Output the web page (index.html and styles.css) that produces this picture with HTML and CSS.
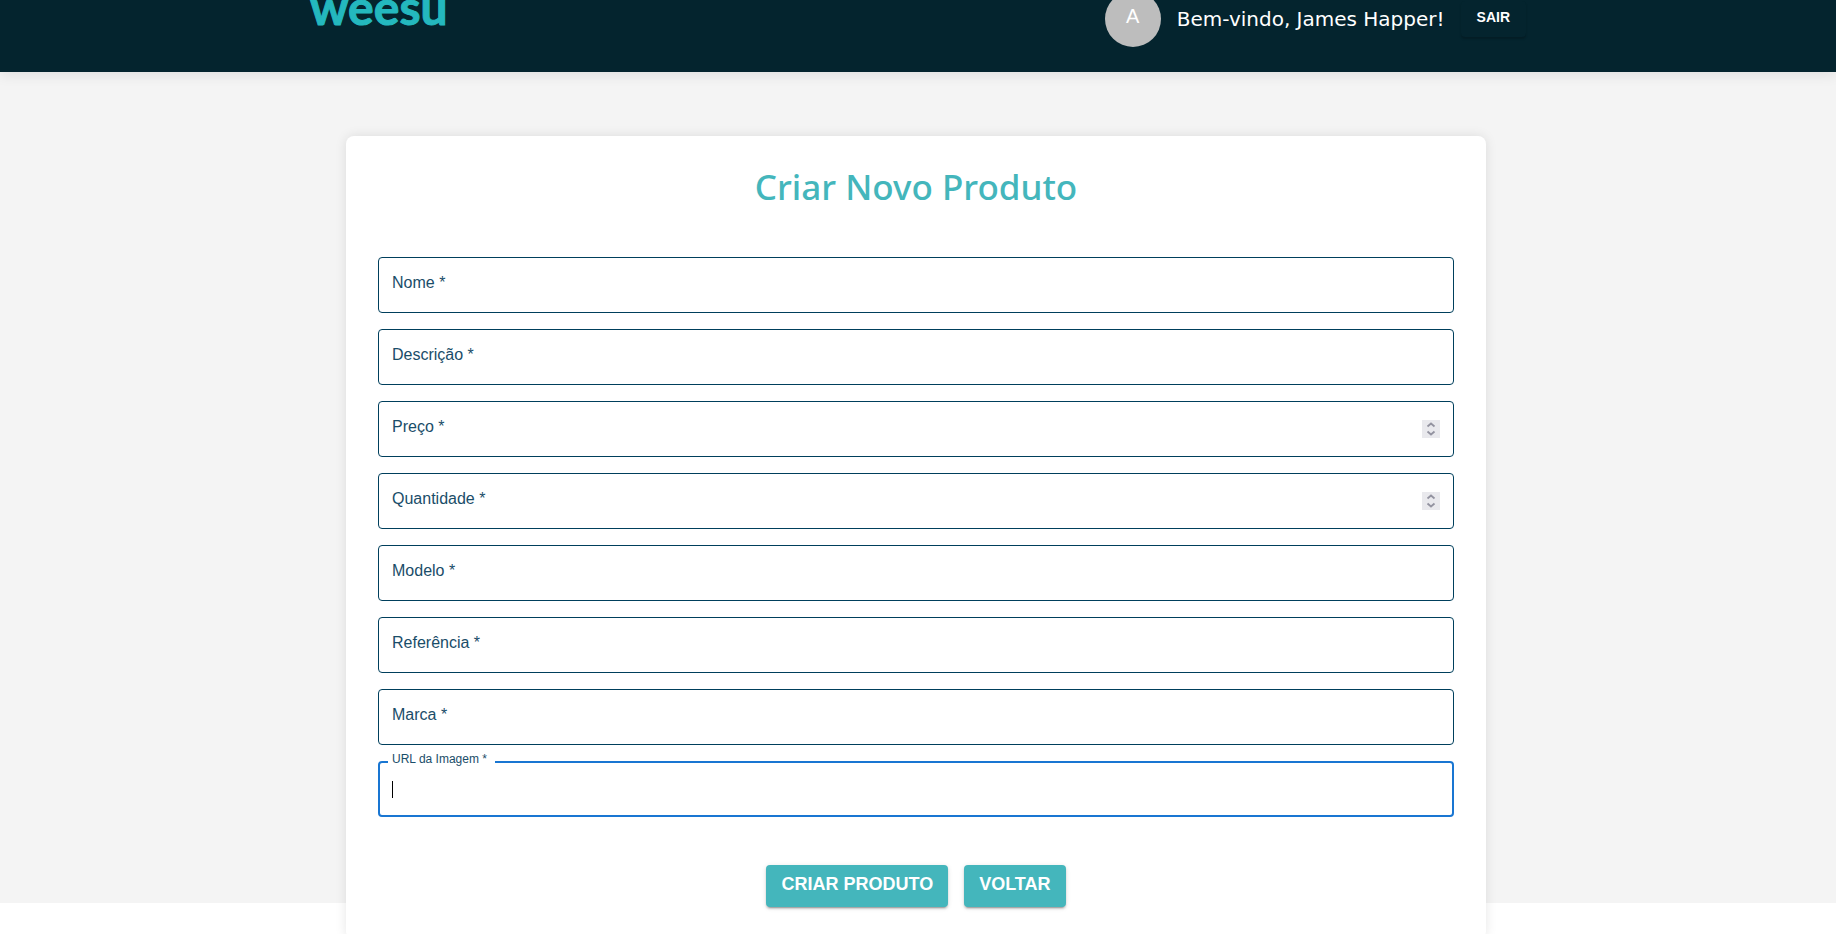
FILE: index.html
```html
<!DOCTYPE html>
<html lang="pt-BR">
<head>
<meta charset="utf-8">
<meta name="viewport" content="width=device-width, initial-scale=1">
<title>Weesu - Criar Novo Produto</title>
<link rel="stylesheet" href="styles.css">
</head>
<body>
<div class="page">
  <header class="header">
    <div class="header-inner">
      <a class="logo" href="#" aria-label="weesu">weesu</a>
      <div class="user">
        <span class="avatar">A</span>
        <span class="welcome">Bem-vindo, James Happer!</span>
        <button class="logout" type="button">SAIR</button>
      </div>
    </div>
  </header>
  <main class="main">
    <form class="card">
      <h1 class="title">Criar Novo Produto</h1>
      <div class="fields">
        <div class="field"><label class="label" for="nome">Nome *</label><input class="input" id="nome" type="text"></div>
        <div class="field"><label class="label" for="descricao">Descrição *</label><input class="input" id="descricao" type="text"></div>
        <div class="field"><label class="label" for="preco">Preço *</label><input class="input" id="preco" type="number">
          <svg class="spinner" viewBox="0 0 18 18" aria-hidden="true"><path d="M5.500 6.500 9 3.500l3.500 3M5.500 11.500l3.500 3 3.500-3"/></svg></div>
        <div class="field"><label class="label" for="quantidade">Quantidade *</label><input class="input" id="quantidade" type="number">
          <svg class="spinner" viewBox="0 0 18 18" aria-hidden="true"><path d="M5.500 6.500 9 3.500l3.500 3M5.500 11.500l3.500 3 3.500-3"/></svg></div>
        <div class="field"><label class="label" for="modelo">Modelo *</label><input class="input" id="modelo" type="text"></div>
        <div class="field"><label class="label" for="referencia">Referência *</label><input class="input" id="referencia" type="text"></div>
        <div class="field"><label class="label" for="marca">Marca *</label><input class="input" id="marca" type="text"></div>
        <div class="field field-active"><label class="label" for="imagem">URL da Imagem *</label><input class="input" id="imagem" type="text"><span class="caret"></span></div>
      </div>
      <div class="actions">
        <button class="button" type="submit">CRIAR PRODUTO</button>
        <button class="button" type="button">VOLTAR</button>
      </div>
    </form>
  </main>
</div>
</body>
</html>
```

FILE: styles.css
```css
* { box-sizing: border-box; }

body {
  margin: 0;
  height: 100vh;
  overflow: hidden;
  background: #fff;
  font-family: "Liberation Sans", Arial, sans-serif;
}

/* The view is scrolled down a little: the top of the header is cut off */
.page {
  height: 100vh;
  margin-top: -31px;
  background: #f4f4f4;
}

.header {
  padding: 22px 0 25px;
  background: #04242e;
  box-shadow: 0 4px 12px rgba(0, 0, 0, 0.08);
}

.header-inner {
  display: flex;
  align-items: center;
  justify-content: space-between;
  max-width: 1280px;
  margin: 0 auto;
  padding: 0 32px;
}

.logo {
  padding-bottom: 24px;
  color: #24b8be;
  font-family: Lato, sans-serif;
  font-size: 48px;
  font-weight: 700;
  line-height: 32px;
  text-decoration: none;
  -webkit-text-stroke: 1px #24b8be;
}

.user {
  display: flex;
  align-items: center;
  gap: 16px;
}

.avatar {
  display: flex;
  justify-content: center;
  width: 56px;
  height: 56px;
  border-radius: 50%;
  background: #bdbdbd;
  color: #fff;
  font-size: 20px;
  line-height: 50px;
}

.welcome {
  color: #fff;
  font-family: "DejaVu Sans", Verdana, sans-serif;
  font-size: 20px;
  line-height: 32px;
}

.logout {
  padding: 4px 16px 8px;
  border: 0;
  border-radius: 4px;
  background: #04242e;
  box-shadow: 0 2px 2px rgba(0, 0, 0, 0.2);
  color: #fff;
  font: 700 14px/24px "Liberation Sans", Arial, sans-serif;
}

.main { padding: 64px 20px 32px 16px; }

.card {
  max-width: 1140px;
  margin: 0 auto;
  padding: 32px;
  border-radius: 8px;
  background: #fff;
  box-shadow: 0 0 12px rgba(0, 0, 0, 0.1);
}

.title {
  margin: 0 0 51px;
  color: #44b6bc;
  font-family: "Noto Sans", sans-serif;
  font-size: 35px;
  font-weight: 500;
  line-height: 38px;
  text-align: center;
}

.fields {
  display: grid;
  gap: 16px;
}

.field { position: relative; }

.input {
  display: block;
  width: 100%;
  height: 56px;
  padding: 0 14px;
  border: 1px solid #003f5c;
  border-radius: 4px;
  outline: 0;
  background: #fff;
  color: #000;
  font: 16px/24px "Liberation Sans", Arial, sans-serif;
  appearance: textfield;
}

.input::-webkit-inner-spin-button { display: none; }

.label {
  position: absolute;
  top: 14px;
  left: 14px;
  color: #1a4d69;
  font-size: 16px;
  line-height: 24px;
}

.spinner {
  position: absolute;
  top: 19px;
  right: 14px;
  width: 18px;
  height: 18px;
  background: #e9e9ed;
  fill: none;
  stroke: #9393a0;
  stroke-width: 1.8;
}

.field-active .input { border: 2px solid #1976d2; }

.field-active .label {
  top: -10px;
  left: 10px;
  padding: 0 8px 0 4px;
  background: #fff;
  font-size: 12px;
  line-height: 16px;
}

.caret {
  position: absolute;
  top: 20px;
  left: 14px;
  width: 1px;
  height: 17px;
  background: #000;
}

.actions {
  display: flex;
  justify-content: center;
  gap: 16px;
  margin-top: 48px;
}

.button {
  padding: 7px 15px 11px;
  border: 0;
  border-radius: 4px;
  background: #44b6bc;
  box-shadow: 0 3px 1px -2px rgba(0, 0, 0, 0.2), 0 2px 2px rgba(0, 0, 0, 0.14), 0 1px 5px rgba(0, 0, 0, 0.12);
  color: #fff;
  font: 700 18px/24px "Liberation Sans", Arial, sans-serif;
}
```
